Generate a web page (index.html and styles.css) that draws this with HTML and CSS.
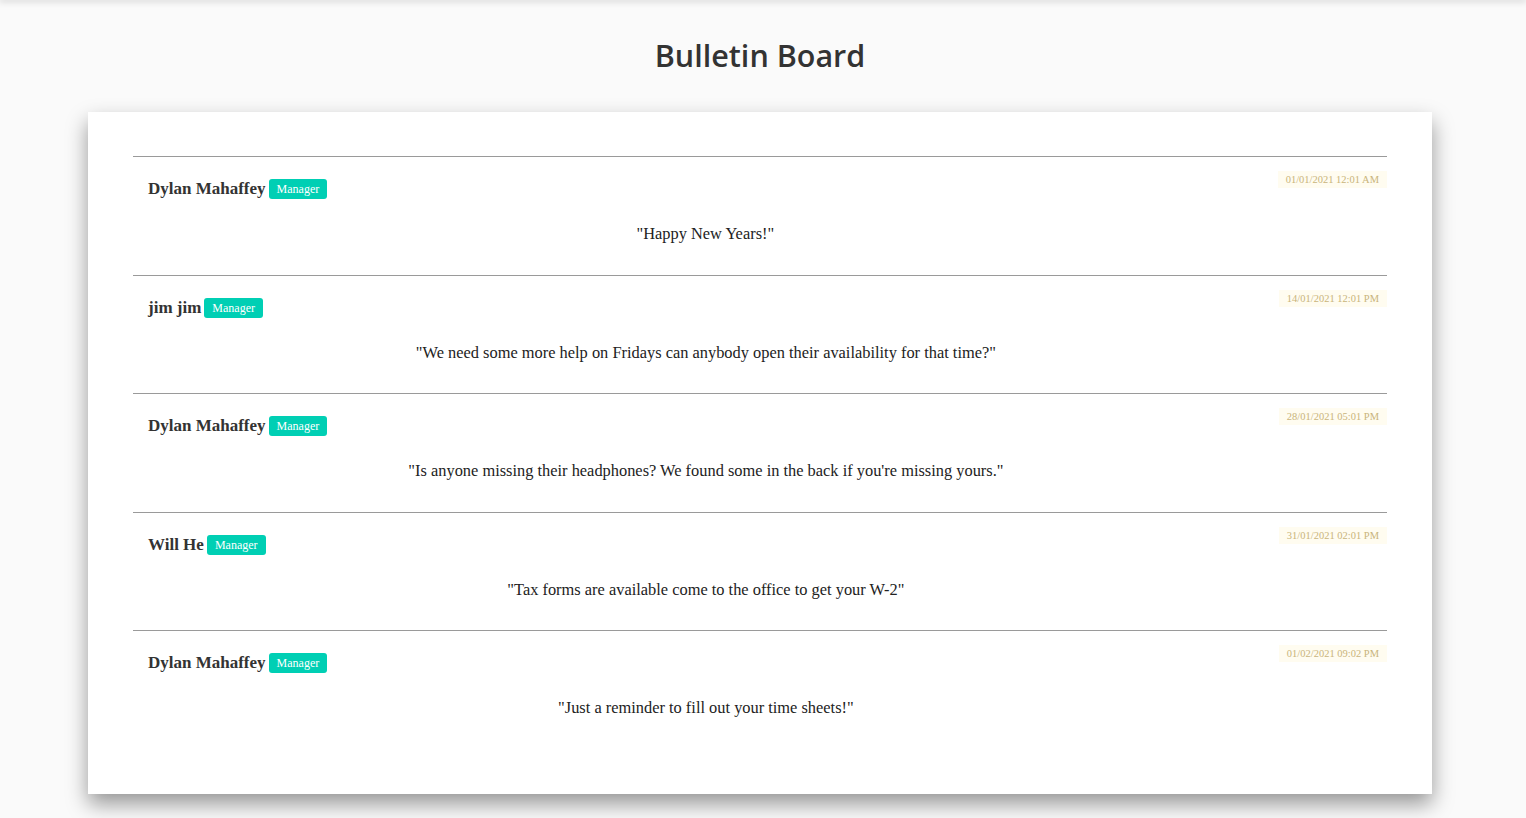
FILE: index.html
```html
<!DOCTYPE html>
<html lang="en">
<head>
<meta charset="utf-8">
<title>Bulletin Board</title>
<link rel="stylesheet" href="styles.css">
</head>
<body>
<div class="topbar"></div>
<h1 class="title">Bulletin Board</h1>
<main class="board">
  <article class="post">
    <div class="post-main">
      <div class="author"><span class="name">Dylan Mahaffey</span><span class="badge">Manager</span></div>
      <p class="message">"Happy New Years!"</p>
    </div>
    <div class="date">01/01/2021 12:01 AM</div>
  </article>
  <article class="post">
    <div class="post-main">
      <div class="author"><span class="name">jim jim</span><span class="badge">Manager</span></div>
      <p class="message">"We need some more help on Fridays can anybody open their availability for that time?"</p>
    </div>
    <div class="date">14/01/2021 12:01 PM</div>
  </article>
  <article class="post">
    <div class="post-main">
      <div class="author"><span class="name">Dylan Mahaffey</span><span class="badge">Manager</span></div>
      <p class="message">"Is anyone missing their headphones? We found some in the back if you're missing yours."</p>
    </div>
    <div class="date">28/01/2021 05:01 PM</div>
  </article>
  <article class="post">
    <div class="post-main">
      <div class="author"><span class="name">Will He</span><span class="badge">Manager</span></div>
      <p class="message">"Tax forms are available come to the office to get your W-2"</p>
    </div>
    <div class="date">31/01/2021 02:01 PM</div>
  </article>
  <article class="post">
    <div class="post-main">
      <div class="author"><span class="name">Dylan Mahaffey</span><span class="badge">Manager</span></div>
      <p class="message">"Just a reminder to fill out your time sheets!"</p>
    </div>
    <div class="date">01/02/2021 09:02 PM</div>
  </article>
</main>
</body>
</html>
```
FILE: styles.css
```css
html, body {
  margin: 0;
  padding: 0;
}
body {
  background: #fafafa;
  font-family: "Liberation Serif", serif;
  color: #222;
  min-height: 818px;
  box-sizing: border-box;
  padding-bottom: 24px;
}
.topbar {
  height: 0;
  box-shadow: 0 0 6px 1px rgba(0, 0, 0, 0.3);
}
.title {
  margin: 0;
  padding: 37px 6px 0 0;
  height: 36px;
  line-height: 36px;
  text-align: center;
  font-family: "Open Sans", sans-serif;
  font-weight: 600;
  font-size: 30.5px;
  color: #333;
}
.board {
  margin: 39px 0 0 88px;
  width: 1344px;
  box-sizing: border-box;
  background: #fff;
  padding: 44px 45px 45px;
  box-shadow: 0 10px 20px rgba(0, 0, 0, 0.4);
}
.post {
  display: flex;
  align-items: flex-start;
  border-top: 1px solid #9a9a9a;
  padding: 13px 0 29.5px;
}
.post-main {
  flex: 1;
  padding: 8px 15px 0;
}
.author {
  display: flex;
  align-items: center;
  height: 22px;
}
.name {
  font-weight: 700;
  font-size: 17px;
  color: #333;
}
.badge {
  margin-left: 3px;
  background: #00cfb4;
  color: #fff;
  font-size: 12px;
  line-height: 20px;
  height: 20px;
  padding: 0 8px;
  border-radius: 3px;
}
.message {
  margin: 23px 0 0;
  text-align: center;
  font-size: 16.4px;
  line-height: 22px;
  color: #222;
}
.date {
  margin-top: 1px;
  background: #fffcf0;
  color: #c9b47a;
  font-size: 10.5px;
  line-height: 17px;
  padding: 0 8px;
}
```
